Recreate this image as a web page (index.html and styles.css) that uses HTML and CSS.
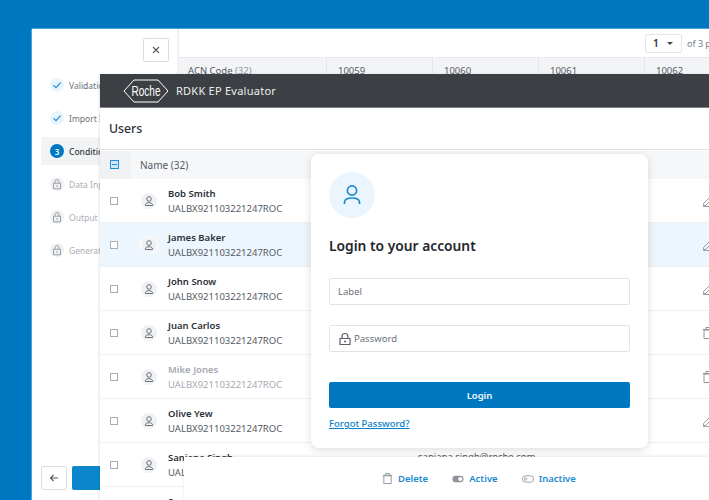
FILE: index.html
```html
<!DOCTYPE html>
<html lang="en">
<head>
<meta charset="utf-8">
<title>RDKK EP Evaluator</title>
<link rel="stylesheet" href="styles.css">
</head>
<body>
<svg class="defs" width="0" height="0" aria-hidden="true">
  <symbol id="check" viewBox="0 0 14 14"><path d="M3.5 7.2l2.5 2.5 4.6-5" fill="none" stroke="currentColor" stroke-width="1.1"/></symbol>
  <symbol id="lock" viewBox="0 0 14 14"><path d="M3.5 6.2h7v5.6h-7zM5 6.200V4.600a2 2 0 0 1 4 0v1.600" fill="none" stroke="currentColor" stroke-width="1"/><circle cx="7" cy="9" r=".8" fill="currentColor"/></symbol>
  <symbol id="user" viewBox="0 0 16 16"><circle cx="8" cy="6" r="2.300" fill="none" stroke="currentColor" stroke-width="1"/><path d="M4.300 12.500c0-2 1.500-2.800 3.700-2.800s3.700.8 3.700 2.800M4.300 12.500h7.400" fill="none" stroke="currentColor" stroke-width="1"/></symbol>
  <symbol id="edit" viewBox="0 0 12 12"><path d="M1.500 8.500L7.800 2.200l2 2L3.500 10.500H1.500zM6.800 3.200l2 2M1 11.500h10" fill="none" stroke="currentColor" stroke-width=".9"/></symbol>
  <symbol id="trash" viewBox="0 0 12 14"><path d="M2 4h8v8.500H2zM.8 3.500h10.400M4 3.500V1.500h4v2" fill="none" stroke="currentColor" stroke-width="1"/></symbol>
</svg>

<section class="window back">
  <aside class="side">
    <button class="close" type="button"><svg width="10" height="10" viewBox="0 0 10 10"><path d="M2 2l6 6M8 2l-6 6" stroke="currentColor" stroke-width="1.100"/></svg></button>
    <ol class="steps">
      <li class="step"><span class="dot done"><svg width="14" height="14"><use href="#check"/></svg></span>Validation</li>
      <li class="step"><span class="dot done"><svg width="14" height="14"><use href="#check"/></svg></span>Import Data</li>
      <li class="step current"><span class="dot num">3</span>Conditions</li>
      <li class="step locked"><span class="dot"><svg width="14" height="14"><use href="#lock"/></svg></span>Data Input</li>
      <li class="step locked"><span class="dot"><svg width="14" height="14"><use href="#lock"/></svg></span>Output Settings</li>
      <li class="step locked"><span class="dot"><svg width="14" height="14"><use href="#lock"/></svg></span>Generate</li>
    </ol>
    <div class="side-foot">
      <button class="back-btn" type="button"><svg width="10" height="10" viewBox="0 0 10 10"><path d="M9 5H1.500M4.500 2L1.500 5l3 3" fill="none" stroke="currentColor" stroke-width="1.100"/></svg></button>
      <button class="next-btn" type="button"></button>
    </div>
  </aside>
  <div class="back-main">
    <div class="pager">
      <span class="page-select">1<i class="caret"></i></span>
      <span class="page-of">of 3 pages</span>
    </div>
    <div class="acn">
      <div class="acn-cell acn-first">ACN Code <span class="muted">(32)</span></div>
      <div class="acn-cell">10059</div>
      <div class="acn-cell">10060</div>
      <div class="acn-cell">10061</div>
      <div class="acn-cell">10062</div>
    </div>
  </div>
</section>

<section class="window front">
  <header class="brand">
    <svg class="logo" width="46" height="24" viewBox="0 0 46 24">
      <path d="M1 12L11 1h24l10 11-10 11H11z" fill="none" stroke="#fff" stroke-width="1"/>
      <text x="23" y="17" text-anchor="middle" textLength="29" lengthAdjust="spacingAndGlyphs" class="logo-text">Roche</text>
    </svg>
    <span class="brand-name">RDKK EP Evaluator</span>
  </header>
  <h1 class="users-title">Users</h1>
  <div class="thead">
    <span class="thead-check"><span class="minus"></span></span>
    <span class="thead-name">Name (32)</span>
  </div>
  <div class="row"><span class="box"></span><span class="avatar"><svg width="16" height="16"><use href="#user"/></svg></span><span class="who"><b>Bob Smith</b><span>UALBX921103221247ROC</span></span><span class="mail"></span><svg class="act" width="12" height="12"><use href="#edit"/></svg></div>
  <div class="row selected"><span class="box"></span><span class="avatar"><svg width="16" height="16"><use href="#user"/></svg></span><span class="who"><b>James Baker</b><span>UALBX921103221247ROC</span></span><span class="mail"></span><svg class="act" width="12" height="12"><use href="#edit"/></svg></div>
  <div class="row"><span class="box"></span><span class="avatar"><svg width="16" height="16"><use href="#user"/></svg></span><span class="who"><b>John Snow</b><span>UALBX921103221247ROC</span></span><span class="mail"></span><svg class="act" width="12" height="12"><use href="#edit"/></svg></div>
  <div class="row"><span class="box"></span><span class="avatar"><svg width="16" height="16"><use href="#user"/></svg></span><span class="who"><b>Juan Carlos</b><span>UALBX921103221247ROC</span></span><span class="mail"></span><svg class="act" width="12" height="14"><use href="#trash"/></svg></div>
  <div class="row inactive"><span class="box"></span><span class="avatar"><svg width="16" height="16"><use href="#user"/></svg></span><span class="who"><b>Mike Jones</b><span>UALBX921103221247ROC</span></span><span class="mail"></span><svg class="act" width="12" height="14"><use href="#trash"/></svg></div>
  <div class="row"><span class="box"></span><span class="avatar"><svg width="16" height="16"><use href="#user"/></svg></span><span class="who"><b>Olive Yew</b><span>UALBX921103221247ROC</span></span><span class="mail"></span><svg class="act" width="12" height="12"><use href="#edit"/></svg></div>
  <div class="row"><span class="box"></span><span class="avatar"><svg width="16" height="16"><use href="#user"/></svg></span><span class="who"><b>Sanjana Singh</b><span>UALBX921103221247ROC</span></span><span class="mail">sanjana.singh@roche.com</span><svg class="act" width="12" height="12"><use href="#edit"/></svg></div>
  <div class="row"><span class="box"></span><span class="avatar"><svg width="16" height="16"><use href="#user"/></svg></span><span class="who"><b>Sam Lee</b><span>UALBX921103221247ROC</span></span><span class="mail"></span></div>
</section>

<section class="card">
  <span class="card-avatar"><svg width="24" height="24" viewBox="0 0 24 24"><circle cx="12" cy="7.500" r="4.600" fill="none" stroke="currentColor" stroke-width="1.700"/><path d="M4.500 21v-1.500c0-3 2.500-4.500 7.500-4.500s7.500 1.500 7.500 4.500V21" fill="none" stroke="currentColor" stroke-width="1.700"/></svg></span>
  <h2 class="card-title">Login to your account</h2>
  <div class="field">Label</div>
  <div class="field pass"><svg width="14" height="14" viewBox="0 0 14 14"><path d="M2 6.500h10v6H2zM4 6.500V4.500a3 3 0 0 1 6 0v2" fill="none" stroke="currentColor" stroke-width="1.200"/><circle cx="7" cy="9.500" r="1" fill="currentColor"/></svg>Password</div>
  <button class="login" type="button">Login</button>
  <a class="forgot" href="#">Forgot Password?</a>
</section>

<nav class="actions">
  <span class="action"><svg width="11" height="13" viewBox="0 0 12 14"><use href="#trash"/></svg>Delete</span>
  <span class="action"><svg width="12" height="8" viewBox="0 0 13 8"><rect x=".5" y=".5" width="12" height="7" rx="3.500" fill="#8d929b"/><circle cx="9" cy="4" r="2.300" fill="#fff"/></svg>Active</span>
  <span class="action"><svg width="12" height="8" viewBox="0 0 13 8"><rect x=".5" y=".5" width="12" height="7" rx="3.500" fill="#fff" stroke="#9a9fa7"/><circle cx="4" cy="4" r="2" fill="#c5c8cd"/></svg>Inactive</span>
</nav>
</body>
</html>
```

FILE: styles.css
```css
* { box-sizing: border-box; }
html, body { height: 100%; }
body {
  margin: 0;
  position: relative;
  overflow: hidden;
  background: #0078c1;
  color: #2c3038;
  font-family: "Noto Sans", "Open Sans", sans-serif;
  font-size: 10px;
}
.defs { position: absolute; }
button { padding: 0; font: inherit; cursor: pointer; }

.window { position: absolute; background: #fff; }

/* back window */
.back {
  left: 32px; top: 29px; width: 677px; height: 471px;
  display: flex;
  box-shadow: 0 -1px 0 #4fa3da, -1px 0 0 #4fa3da;
}
.side {
  width: 147px;
  flex: none;
  border-right: 2px solid #eef0f3;
  padding: 9px 0 10px 9px;
  display: flex;
  flex-direction: column;
}
.close {
  align-self: flex-end;
  width: 26px; height: 24px;
  margin-right: 8px;
  background: #fff;
  border: 1px solid #dcdee3;
  border-radius: 2px;
  color: #555a63;
  display: flex; align-items: center; justify-content: center;
}
.steps { list-style: none; margin: 9px 0 0; padding: 0; display: flex; flex-direction: column; gap: 5px; }
.step {
  height: 28px;
  padding-left: 9px;
  display: flex; align-items: center; gap: 5px;
  color: #6c717a;
  font-size: 8.500px;
  white-space: nowrap;
  border-radius: 2px;
}
.dot {
  width: 14px; height: 14px; border-radius: 50%;
  flex: none;
  display: flex; align-items: center; justify-content: center;
  background: #f0f1f3;
  color: #9a9ea6;
}
.done { background: #e9f5fd; color: #1a8bd0; }
.num { background: #0078c1; color: #fff; font-size: 8px; font-weight: 600; }
.current { background: #f2f3f5; color: #33373e; font-weight: 500; }
.locked { color: #a9adb4; }
.side-foot { margin-top: auto; display: flex; gap: 5px; }
.back-btn {
  width: 26px; height: 24px;
  background: #fff; color: #555a63;
  border: 1px solid #dcdee3; border-radius: 2px;
  display: flex; align-items: center; justify-content: center;
}
.next-btn { flex: 1; height: 24px; background: #0a86cd; border: 0; border-radius: 2px; }
.back-main { flex: 1; min-width: 0; overflow: hidden; }
.pager {
  height: 28px;
  display: flex; align-items: center; justify-content: flex-start;
  padding: 0 0 0 466px;
  white-space: nowrap;
  font-size: 9px;
  color: #7b8088;
}
.page-select {
  flex: none;
  width: 37px; height: 19px;
  margin-right: 5px;
  padding-left: 7px;
  border: 1px solid #e3e5e9; border-radius: 2px;
  display: flex; align-items: center;
  color: #2c3038; font-size: 10px; font-weight: 600;
}
.caret {
  margin-left: 8px;
  border-left: 3px solid transparent; border-right: 3px solid transparent;
  border-top: 3px solid #444850;
}
.acn {
  display: grid;
  grid-template-columns: 148px repeat(4, 106px);
  border-top: 1px solid #e6e8ec;
}
.acn-cell {
  height: 40px;
  padding: 6px 10px 6px 11px;
  background: #f3f4f6;
  border-right: 1px solid #e4e6ea;
  font-size: 9.500px;
  color: #555a63;
}
.acn-first { padding-left: 9px; }
.muted { color: #8f949b; }

/* front window */
.front { left: 100px; top: 74px; width: 609px; height: 426px; overflow: hidden; box-shadow: -1px 0 2px rgba(60,64,70,.12); }
.brand {
  height: 34px;
  padding-left: 23px;
  background: #3c4044;
  border-bottom: 1px solid #7d8186;
  display: flex; align-items: center; gap: 7px;
}
.logo { flex: none; }
.logo-text { fill: #fff; font-family: "Liberation Sans", sans-serif; font-size: 15.500px; font-weight: 400; }
.brand-name { color: #eceded; font-size: 11px; letter-spacing: .25px; }
.users-title {
  margin: 0;
  height: 42px;
  padding-left: 9px;
  border-bottom: 1px solid #dfe1e5;
  display: flex; align-items: center;
  font-size: 12.300px; font-weight: 500; color: #2c3038;
}
.thead {
  height: 28px;
  margin-top: 1px;
  padding-bottom: 1px;
  background: #f6f7f9;
  display: flex; align-items: center;
  color: #555a63; font-size: 10px;
}
.thead-check {
  width: 30px; height: 28px;
  padding-left: 10px;
  background: #eff1f3;
  display: flex; align-items: center;
}
.minus {
  width: 9px; height: 9px;
  border: 1px solid #1f8fd6;
  background: #cfe7f8;
  display: flex; align-items: center; justify-content: center;
}
.minus::after { content: ""; width: 5px; height: 1px; background: #1f8fd6; }
.thead-name { padding-left: 10px; }
.row {
  height: 44px;
  display: grid;
  grid-template-columns: 30px 38px 250px 284px 7px;
  align-items: center;
  border-bottom: 1px solid #eff0f3;
  background: #fff;
}
.selected { background: #edf6fd; }
.box {
  width: 8px; height: 8px;
  margin-left: 10px;
  border: 1px solid #a9adb5;
  background: #fff;
}
.avatar {
  width: 16px; height: 16px;
  margin-left: 11px;
  border-radius: 50%;
  background: #f0f1f3;
  color: #6d727b;
}
.selected .avatar { box-shadow: 0 0 0 1px #fff; }
.who { display: flex; flex-direction: column; white-space: nowrap; line-height: 15.500px; padding-top: 1px; }
.who b { font-size: 9.500px; font-weight: 600; color: #2c3038; }
.who span { font-size: 9.500px; color: #555a63; }
.mail { font-size: 9.500px; color: #555a63; align-self: start; padding-top: 7px; }
.act { color: #8d929b; }
.inactive .who b, .inactive .who span { color: #a6aab1; }

/* login card */
.card {
  position: absolute;
  left: 311px; top: 154px; width: 337px; height: 294px;
  padding: 18px 18px 0;
  background: #fff;
  border-radius: 8px;
  box-shadow: 0 2px 8px rgba(60,64,72,.18);
  display: flex; flex-direction: column;
}
.card-avatar {
  width: 46px; height: 46px; border-radius: 50%;
  background: #eaf5fd; color: #1a8bd0;
  display: flex; align-items: center; justify-content: center;
}
.card-title { margin: 16px 0 0; height: 24px; line-height: 24px; font-size: 13.800px; font-weight: 600; color: #23262c; }
.field {
  height: 27px;
  margin-top: 20px;
  padding-left: 8px;
  border: 1px solid #e1e3e8; border-radius: 2px;
  display: flex; align-items: center; gap: 2px;
  color: #6c717a; font-size: 9.500px;
}
.pass svg { color: #5b6068; }
.login {
  height: 26px;
  margin-top: 30px;
  border: 0; border-radius: 2px;
  background: #0078c1; color: #f2f8fc;
  font-size: 9.500px; font-weight: 600;
}
.forgot { margin-top: 9px; align-self: flex-start; color: #0b7fc7; font-size: 9.500px; font-weight: 500; }

/* bottom action bar */
.actions {
  position: absolute;
  left: 184px; top: 457px; width: 525px; height: 43px;
  padding-left: 198px;
  background: #fff;
  box-shadow: 0 -1px 3px rgba(60,64,72,.12);
  display: flex; align-items: center; gap: 24px;
}
.action { display: flex; align-items: center; gap: 5px; color: #1a8bd0; font-size: 9.500px; font-weight: 600; }
.action svg { color: #8d929b; }
```
